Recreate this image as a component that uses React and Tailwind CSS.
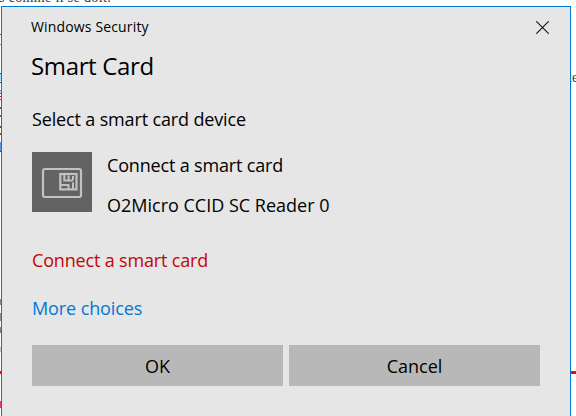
const leftMarks = [
  { top: 34, h: 1, color: "#555555" },
  { top: 44, h: 1, color: "#a09a55" },
  { top: 73, h: 1, color: "#335555" },
  { top: 74, h: 7, color: "#8fe8f5" },
  { top: 82, h: 1, color: "#444444" },
  { top: 90, h: 2, color: "#9aa4ff" },
  { top: 93, h: 1, color: "#555555" },
  { top: 96, h: 1, color: "#a03030" },
  { top: 99, h: 1, color: "#444444" },
  { top: 107, h: 2, color: "#665577" },
  { top: 115, h: 2, color: "#885544" },
  { top: 126, h: 2, color: "#554477" },
  { top: 133, h: 2, color: "#775544" },
  { top: 142, h: 9, color: "#5a9ae0" },
  { top: 151, h: 1, color: "#444444" },
  { top: 299, h: 6, color: "#8a8a86" },
  { top: 313, h: 8, color: "#8f8f8a" },
  { top: 327, h: 6, color: "#84847c" },
  { top: 347, h: 5, color: "#c8c8c8" },
  { top: 401, h: 7, color: "#f0307a" },
];

function CardIcon() {
  return (
    <div className="h-[60px] w-[60px] shrink-0 bg-[#636363]">
      <svg width="60" height="60" viewBox="0 0 60 60" fill="none" stroke="#c2c2c2" strokeWidth="2.2">
        <rect x="11" y="17" width="38" height="28" rx="2" />
        <rect x="28.3" y="22" width="16.2" height="15.4" />
        <path strokeWidth="2" d="M32.3 23V28.5H41M36.6 23.5V28M41 24V28M29 33H36.5V37M41 30.5V37" />
      </svg>
    </div>
  );
}

export default function App() {
  return (
    <div className="relative h-[416px] w-[576px] overflow-hidden bg-white font-['Open_Sans',sans-serif] text-black">
      <div className="absolute -left-px -top-[11px] whitespace-nowrap font-['Liberation_Serif',serif] text-[14px] leading-[18px] tracking-[0.35px] text-[#333]">
        s comme il se doit.
      </div>
      {leftMarks.map((m) => (
        <div key={m.top} className="absolute left-0 w-px" style={{ top: m.top, height: m.h, background: m.color }} />
      ))}
      <div className="absolute left-[568px] top-[69px] font-['Liberation_Serif',serif] text-[14px] leading-[18px] text-[#333]">te</div>
      <div className="absolute left-0 top-[371px] h-[3px] w-full bg-[#ff0000]" />

      <div className="absolute left-px top-[6px] flex h-[420px] w-[570px] flex-col border border-[#0078d7] bg-[#e6e6e6] px-[30px] text-[18px] leading-6">
        <div className="flex h-[39px] justify-between">
          <span className="mt-2 -ml-px whitespace-nowrap text-[14px] leading-6 tracking-[0.15px]">Windows Security</span>
          <svg className="mt-[14px] -mr-[9px]" width="13" height="13" viewBox="0 0 13 13" stroke="#111" strokeWidth="1.1">
            <path d="M0.3 0.3L12.7 12.7M12.7 0.3L0.3 12.7" />
          </svg>
        </div>
        <h1 className="-ml-px text-[24px] leading-[40px] tracking-[-0.35px]">Smart Card</h1>
        <div className="mt-[21px] tracking-[-0.15px]">Select a smart card device</div>
        <div className="mt-[21px] flex h-[60px] gap-[15px]">
          <CardIcon />
          <div className="mt-px flex flex-col gap-4">
            <span className="tracking-[-0.17px]">Connect a smart card</span>
            <span>O2Micro CCID SC Reader 0</span>
          </div>
        </div>
        <div className="mt-[36px] tracking-[-0.17px] text-[#c50500]">Connect a smart card</div>
        <div className="mt-6 tracking-[-0.1px] text-[#0078d7]">More choices</div>
        <div className="mt-[25px] flex gap-[6px]">
          <button className="h-[41px] w-[251px] bg-[#b8b8b8]">OK</button>
          <button className="h-[41px] w-[251px] bg-[#b8b8b8]">Cancel</button>
        </div>
      </div>
    </div>
  );
}
